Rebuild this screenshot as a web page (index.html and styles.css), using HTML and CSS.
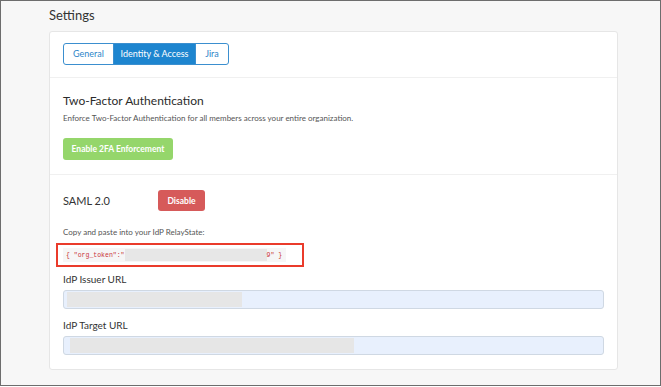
FILE: index.html
```html
<!DOCTYPE html>
<html lang="en">
<head>
    <meta charset="UTF-8">
    <meta name="viewport" content="width=device-width, initial-scale=1.0">
    <title>Settings</title>
    <link rel="stylesheet" href="styles.css">
</head>
<body>

    <div class="frame">
        <h1 class="page-title">Settings</h1>

        <div class="card">
            <div class="card-head">
                <div class="tabs">
                    <a class="tab tab-general">General</a>
                    <a class="tab tab-identity active">Identity &amp; Access</a>
                    <a class="tab tab-jira">Jira</a>
                </div>
            </div>

            <section class="panel">
                <h2 class="panel-title">Two-Factor Authentication</h2>
                <p class="panel-text">Enforce Two-Factor Authentication for all members across your entire organization.</p>
                <button class="btn btn-green">Enable 2FA Enforcement</button>
            </section>

            <section class="panel panel-saml">
                <div class="saml-row">
                    <h2 class="saml-title">SAML 2.0</h2>
                    <button class="btn btn-red">Disable</button>
                </div>

                <p class="panel-text copy-text">Copy and paste into your IdP RelayState:</p>
                <div class="token-box">
                    <code class="token">{ "org_token":"<span class="redacted"></span>9" }</code>
                </div>

                <label class="field-label">IdP Issuer URL</label>
                <div class="field"><span class="field-value issuer"></span></div>

                <label class="field-label">IdP Target URL</label>
                <div class="field"><span class="field-value target"></span></div>
            </section>
        </div>
    </div>

</body>
</html>
```

FILE: styles.css
```css
* {
    box-sizing: border-box;
}

body {
    margin: 0;
    font-family: Lato, "Noto Sans", Arial, sans-serif;
    background-color: #fff;
    color: #333;
}

.frame {
    width: 661px;
    height: 386px;
    border: 1px solid #6d6d6d;
    background-color: #f7f7f7;
    padding: 0 42px 0 48px;
}

.page-title {
    margin: 0;
    padding: 6px 0 0 0;
    height: 30px;
    font-size: 13px;
    font-weight: normal;
    color: #333;
}

.card {
    background-color: #fff;
    border: 1px solid #e6e6e6;
    border-radius: 3px;
}

.card-head {
    padding: 11px 13px 12px;
    border-bottom: 1px solid #f0f0f0;
}

.tabs {
    display: flex;
    width: max-content;
    border: 1px solid #3b8fcf;
    border-radius: 3px;
    overflow: hidden;
}

.tab {
    height: 20px;
    line-height: 20px;
    font-size: 9px;
    color: #2e86c9;
    text-align: center;
    white-space: nowrap;
    border-left: 1px solid #3b8fcf;
}

.tab-general {
    border-left: none;
    width: 49px;
}

.tab-identity {
    width: 82px;
}

.tab-jira {
    width: 33px;
}

.tab.active {
    background-color: #1d85cf;
    color: #fff;
}

.panel {
    padding: 15px 13px 14px;
    border-bottom: 1px solid #f0f0f0;
}

.panel-saml {
    border-bottom: none;
    padding-top: 15px;
    padding-bottom: 14px;
}

.panel-title {
    margin: 0;
    font-size: 12px;
    font-weight: normal;
    line-height: 16px;
    color: #2b2b2b;
}

.panel-text {
    margin: 4px 0 13px;
    font-size: 8px;
    line-height: 10px;
    color: #555;
}

.btn {
    border: none;
    border-radius: 3px;
    color: #fff;
    font-family: inherit;
    font-weight: bold;
    font-size: 8.5px;
    height: 22px;
    padding: 0;
    white-space: nowrap;
}

.btn-green {
    background-color: #95d66b;
    width: 110px;
}

.btn-red {
    background-color: #d65a5a;
    width: 47px;
    height: 21px;
}

.saml-row {
    display: flex;
    align-items: center;
    gap: 47px;
}

.saml-title {
    margin: 0;
    font-size: 11px;
    font-weight: normal;
    width: 48px;
}

.copy-text {
    margin: 16px 0 6px;
}

.token-box {
    width: 248px;
    margin-left: -7px;
    margin-bottom: 2px;
    border: 2px solid #ea3b2b;
    padding: 3px 16px 3px 5px;
}

.token {
    display: flex;
    align-items: center;
    height: 14px;
    background-color: #f6f6f6;
    font-family: "Liberation Mono", monospace;
    font-size: 6.5px;
    color: #c9343a;
    padding-left: 3px;
    white-space: pre;
}

.redacted {
    display: inline-block;
    width: 142px;
    height: 12px;
    background-color: #e7e7e7;
}

.field-label {
    display: block;
    margin: 6px 0 5px;
    font-size: 10px;
    line-height: 12px;
    color: #333;
}

.field + .field-label {
    margin-top: 10px;
}

.field {
    height: 19px;
    background-color: #e8f0fd;
    border: 1px solid #cfd8e3;
    border-radius: 3px;
    padding: 1px 3px;
}

.field-value {
    display: block;
    height: 15px;
    background-color: #e6e6e6;
}

.issuer {
    width: 175px;
}

.target {
    width: 284px;
    margin-left: 3px;
}
```
